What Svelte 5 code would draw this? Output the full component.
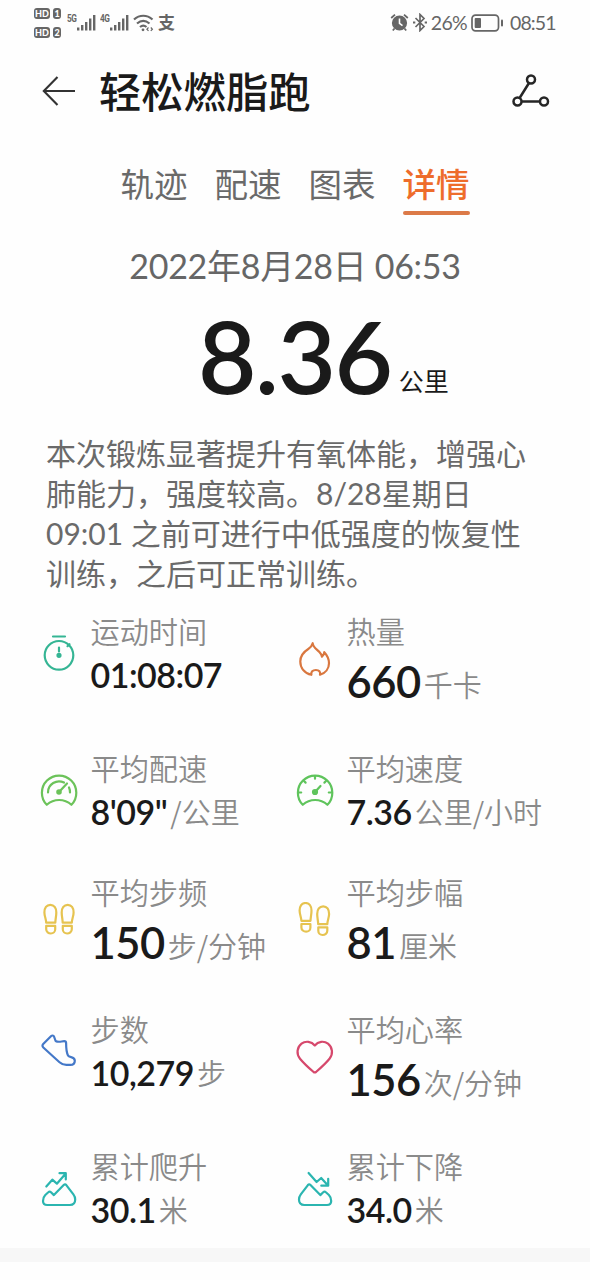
<script lang="ts">
  type Metric = {
    icon: string;
    color: string;
    label: string;
    value: string;
    unit?: string;
    big?: boolean;
  };

  const tabs = ['轨迹', '配速', '图表', '详情'];
  let active = $state('详情');

  const summary = [
    '本次锻炼显著提升有氧体能，增强心',
    '肺能力，强度较高。8/28星期日',
    '09:01 之前可进行中低强度的恢复性',
    '训练，之后可正常训练。'
  ];

  const metrics: Metric[] = [
    { icon: 'timer', color: '#35b594', label: '运动时间', value: '01:08:07' },
    { icon: 'flame', color: '#d9773f', label: '热量', value: '660', unit: '千卡', big: true },
    { icon: 'pace', color: '#6cc35a', label: '平均配速', value: `8'09"`, unit: '/公里' },
    { icon: 'speed', color: '#5fc45c', label: '平均速度', value: '7.36', unit: '公里/小时' },
    { icon: 'cadence', color: '#e6c350', label: '平均步频', value: '150', unit: '步/分钟', big: true },
    { icon: 'stride', color: '#e6c350', label: '平均步幅', value: '81', unit: '厘米', big: true },
    { icon: 'shoe', color: '#4478c8', label: '步数', value: '10,279', unit: '步' },
    { icon: 'heart', color: '#d6486c', label: '平均心率', value: '156', unit: '次/分钟', big: true },
    { icon: 'climb', color: '#2bb5b0', label: '累计爬升', value: '30.1', unit: '米' },
    { icon: 'descent', color: '#2bb5b0', label: '累计下降', value: '34.0', unit: '米' }
  ];
</script>

{#snippet sim(n: number)}
  <span class="sim"><b>HD</b><i>{n}</i></span>
{/snippet}

{#snippet signal(gen: string)}
  <span class="signal">
    <em>{gen}</em>
    <svg width="19" height="17" viewBox="0 0 19 17" fill="#666">
      <rect x="0" y="13.5" width="2.4" height="3" />
      <rect x="4" y="11" width="2.4" height="5.5" />
      <rect x="8" y="8" width="2.4" height="8.5" />
      <rect x="12" y="4.5" width="2.4" height="12" />
      <rect x="16" y="1" width="2.4" height="15.5" />
    </svg>
  </span>
{/snippet}

{#snippet foot()}
  <path d="M10.3 2.800c3.800 0 6 3.200 6 7.600 0 3.600-.8 6.200-1 10.200H6.200C6 16.600 4.400 14 4.400 10.400c0-4.400 2.100-7.600 5.900-7.600zM6.200 23.800h9v3.400c0 2.600-1.900 4.300-4.300 4.300s-4.700-1.700-4.700-4.300z" />
{/snippet}

{#snippet glyph(name: string)}
  {#if name === 'timer'}
    <circle cx="19" cy="20.3" r="14.3" />
    <path d="M13 1.5h12M27.500 11.200l2-2M19 12.500v4" />
    <circle cx="19" cy="20.300" r="1.500" fill="currentColor" />
  {:else if name === 'flame'}
    <path d="M16.700 2.200c.2 4 4.100 6 6.700 8.800 1.400 1.500 2.200 3 2.600 4.700 1.300-1 2.100-2.500 2.300-4.500 3 3.200 4.700 6.800 4.700 11 0 5.300-3.500 9.900-9 11.600.6-3-.8-4.800-4.100-4.800s-5.100 1.800-4.500 4.800C8.500 32.200 4.300 27 4.300 20.500 4.300 14.500 7.500 11 12.300 8c2-1.300 3.600-3 4.400-5.800z" />
  {:else if name === 'pace' || name === 'speed'}
    <path d="M6.800 32.800a17.200 17.200 0 1 1 24.600 0C27.500 29.300 23.500 28 19.100 28S10.700 29.300 6.800 32.800z" />
    {#if name === 'pace'}
      <path d="M8 20.500A11 11 0 0 1 24 10.600M29 15.500a11 11 0 0 1 1 5M19.500 19.500l7.500-8" />
      <circle cx="19" cy="20" r="1.700" fill="currentColor" />
    {:else}
      <path d="M19 4.500v2.200M8 9l1.600 1.600M30 9l-1.600 1.600M3 20.500h2.200M35 20.500h-2.200M19.500 19.500l5-5.500" />
      <circle cx="19" cy="20" r="2" fill="currentColor" />
    {/if}
  {:else if name === 'cadence'}
    {@render foot()}
    <g transform="translate(38 0) scale(-1 1)">{@render foot()}</g>
  {:else if name === 'stride'}
    <g transform="translate(-.8 -1.800)">{@render foot()}</g>
    <g transform="translate(37.500 1.500) scale(-1 1)">{@render foot()}</g>
  {:else if name === 'shoe'}
    <path d="M12.700 2.500c.6 0 1 .3 1.300 1L15.600 8c3 1.700 5.900.2 8.600.2 1.200 0 1.900.7 1.900 1.900 0 4.600.2 9 1.900 12.400 1.300 2.600 6.800.6 6.800 5.200 0 2.900-1.800 4.200-4.500 4.200h-4c-2.700 0-4.900-1-6.800-2.700L3.300 14.500c-1.100-1-1.100-2.400-.1-3.500l8-8c.4-.4.9-.5 1.500-.5z" />
  {:else if name === 'heart'}
    <path d="M18.800 6.500C15.500 2.300 9.500 1.500 5.500 4.700.8 8.400.2 15 4 19.700 7 23.300 12.500 28.600 17.600 33c.8.6 1.600.6 2.400 0 5-4.400 10.600-9.700 13.500-13.300C37.300 15 36.700 8.400 32 4.700 28 1.500 22.100 2.300 18.800 6.500z" />
  {:else if name === 'climb'}
    <path d="M6.300 16.500l6-6.800 4.600 4 8.600-10M19.500 3.200h6.300v6.300M8.300 22.300c.9-.9 1.800-.9 2.700 0l2.900 2.800 9.800-10c.9-.9 1.800-.9 2.600 0l7.100 9.300c1.100 1.500 1.800 3 1.800 5.100 0 3.500-2 5.500-5.300 5.500H7.200C4.600 35 3 33.500 3 31c0-2.800.7-4.400 2.300-6z" />
  {:else}
    <path d="M12.600 3l8 9 4.600-4 6.800 7.500M32.200 8.800v6.900h-6.900M29.900 22.300c-.9-.9-1.800-.9-2.700 0l-2.900 2.800-9.800-10c-.9-.9-1.800-.9-2.600 0l-7.100 9.300C3.700 25.900 3 27.400 3 29.500 3 33 5 35 8.300 35H31c2.600 0 4.200-1.500 4.200-4 0-2.800-.7-4.400-2.300-6z" />
  {/if}
{/snippet}

<div class="screen">
  <div class="status">
    <div class="sims">{@render sim(1)}{@render sim(2)}</div>
    {@render signal('5G')}
    {@render signal('4G')}
    <svg class="wifi" width="21" height="18" viewBox="0 0 21 18" fill="none" stroke="#666" stroke-width="2.200">
      <path d="M1 5.500C6.500.5 14 .5 19.500 5.500M4 9.500c4-3.400 8.500-3.400 12.500 0M7 13c2-1.700 4.500-1.700 6.500 0" />
      <circle cx="10" cy="15.800" r="1.400" fill="#666" stroke="none" />
      <path d="M15.500 13.500l-1.600 1.700 1.600 1.700M17.800 13.500l1.600 1.700-1.600 1.700" stroke-width="1.200" />
    </svg>
    <span class="pay">支</span>

    <svg class="alarm" width="19" height="19" viewBox="0 0 19 19">
      <circle cx="9.500" cy="10" r="7.600" fill="#666" />
      <path d="M1.200 5L5 1.600M17.800 5L14 1.600M4.500 15.500L2.800 17.500M14.500 15.500l1.700 2" stroke="#666" stroke-width="1.800" />
      <path d="M9.500 5.500v4.800l3 2.400" fill="none" stroke="#fff" stroke-width="1.600" />
    </svg>
    <svg class="bt" width="14" height="19" viewBox="0 0 14 19" fill="none" stroke="#666" stroke-width="1.700">
      <path d="M2.500 5l8.500 8.500-4 4V1.500l4 4L2.500 14" />
      <path d="M0 9.500h2.300M11.700 9.500H14" stroke-width="2" />
    </svg>
    <span class="percent">26%</span>
    <svg class="battery" width="33" height="18" viewBox="0 0 33 18">
      <rect x="1" y="1.200" width="26.500" height="15.600" rx="3.500" fill="none" stroke="#666" stroke-width="1.700" />
      <rect x="3.700" y="4" width="6.300" height="10" rx="1" fill="#666" />
      <rect x="30" y="5.500" width="2" height="7" rx="1" fill="#666" />
    </svg>
    <span class="clock">08:51</span>
  </div>

  <header>
    <svg class="back" width="34" height="32" viewBox="0 0 34 32" fill="none" stroke="#333" stroke-width="2.100">
      <path d="M33 16H2M15.500 2L1.800 16l13.700 14" />
    </svg>
    <h1>轻松燃脂跑</h1>
    <svg class="route" width="38" height="34" viewBox="0 0 38 34" fill="none" stroke="#262626" stroke-width="2.500">
      <circle cx="19" cy="5.500" r="4" />
      <circle cx="5.500" cy="27.500" r="4" />
      <circle cx="32" cy="27.500" r="4" />
      <path d="M17 9L7.600 24M9.500 27.500H28" />
    </svg>
  </header>

  <nav>
    {#each tabs as tab}
      <button class:active={tab === active} onclick={() => (active = tab)}>{tab}</button>
    {/each}
  </nav>

  <div class="date">2022年8月28日 06:53</div>
  <div class="distance"><strong>8.36</strong><span>公里</span></div>

  <div class="summary">
    {#each summary as line}
      <div>{line}</div>
    {/each}
  </div>

  <div class="metrics">
    {#each metrics as m}
      <div class="metric" class:big={m.big}>
        <svg width="38" height="38" viewBox="0 0 38 38" style="color: {m.color}">{@render glyph(m.icon)}</svg>
        <div>
          <div class="label">{m.label}</div>
          <div class="value"><strong>{m.value}</strong>{#if m.unit}<span>{m.unit}</span>{/if}</div>
        </div>
      </div>
    {/each}
  </div>

  <div class="divider"></div>
</div>

<style>
  :global(body) { background: #fff; }
  .screen { width: 590px; height: 1280px; overflow: hidden; display: flex; flex-direction: column; background: #fefefe; color: #666; font-family: Lato, 'Noto Sans CJK SC', sans-serif; white-space: nowrap; }

  .status { display: flex; align-items: center; height: 45px; padding: 0 36px 0 34px; box-sizing: border-box; flex: none; }
  .sims { display: flex; flex-direction: column; gap: 8px; margin-right: 6px; }
  .sim { display: flex; gap: 3px; font-size: 9px; line-height: 11px; color: #fff; }
  .sim b, .sim i { background: #666; border-radius: 3px; text-align: center; font-style: normal; font-weight: 900; }
  .sim b { width: 16px; }
  .sim i { width: 8px; }
  .signal { display: flex; align-items: flex-start; width: 33px; }
  .signal em { font: 700 11px/10px Roboto, sans-serif; width: 10px; letter-spacing: -0.5px; transform: scaleX(0.75); transform-origin: 0 0; }
  .pay { font-size: 17px; font-weight: 600; line-height: 20px; margin-left: 4px; }
  .alarm { margin-left: auto; margin-right: 4px; }
  .percent { font-size: 19.500px; margin: 0 4px 0 4px; letter-spacing: -0.7px; }
  .clock { font-size: 19.500px; margin-left: 6px; width: 44px; letter-spacing: -0.9px; }

  header { display: flex; align-items: center; height: 91px; padding: 0 40px 0 42px; box-sizing: border-box; flex: none; }
  h1 { margin: -2px auto 0 23px; font-size: 42.300px; font-weight: 500; line-height: 60px; color: #1a1a1a; font-family: 'Noto Sans CJK SC', sans-serif; }

  nav { display: flex; justify-content: center; gap: 27px; height: 79px; padding-top: 24px; box-sizing: border-box; flex: none; }
  nav button { border: none; background: none; padding: 0; height: 55px; font: 400 33.500px/46px 'Noto Sans CJK SC', sans-serif; color: #6a6a6a; display: flex; flex-direction: column; justify-content: space-between; }
  nav button.active { color: #ee6c2b; font-weight: 500; }
  nav button.active::after { content: ''; width: 100%; height: 4px; border-radius: 2px; background: #dc7a48; }

  .date { height: 102px; line-height: 102px; text-align: center; font-size: 34px; letter-spacing: -0.3px; flex: none; }
  .distance { display: flex; align-items: baseline; height: 116px; line-height: 77px; padding-left: 198px; color: #1a1a1a; flex: none; }
  .distance strong { font-size: 101px; font-weight: 600; letter-spacing: -1.500px; }
  .distance span { font-size: 25px; margin-left: 7px; transform: translateY(-3px); }

  .summary { padding-left: 46px; font-size: 30px; line-height: 40px; height: 178px; color: #6a6a6a; flex: none; }

  .metrics { display: grid; grid-template-columns: 256px auto; row-gap: 39px; align-items: start; padding-left: 40px; height: 637px; align-content: start; flex: none; }
  .metric { display: flex; align-items: center; gap: 12.500px; height: 85px; }
  .metric.big { height: 98px; }
  .metric svg { fill: none; stroke: currentColor; stroke-width: 2.200; stroke-linecap: round; stroke-linejoin: round; flex: none; }
  .label { font-size: 29.200px; font-weight: 350; line-height: 41px; height: 43px; color: #8a8a8a; }
  .value { display: flex; align-items: baseline; height: 42px; line-height: 42px; }
  .value strong { font-size: 34px; font-weight: 600; color: #1a1a1a; letter-spacing: -0.5px; }
  .value span { font-family: 'Noto Sans CJK SC', sans-serif; font-size: 29px; font-weight: 350; color: #8a8a8a; margin-left: 3px; transform: translateY(-1px); }
  .big .value { height: 55px; line-height: 55px; }
  .big .value strong { font-size: 43.500px; }

  .divider { height: 14px; background: #f7f7f7; flex: none; }
</style>
